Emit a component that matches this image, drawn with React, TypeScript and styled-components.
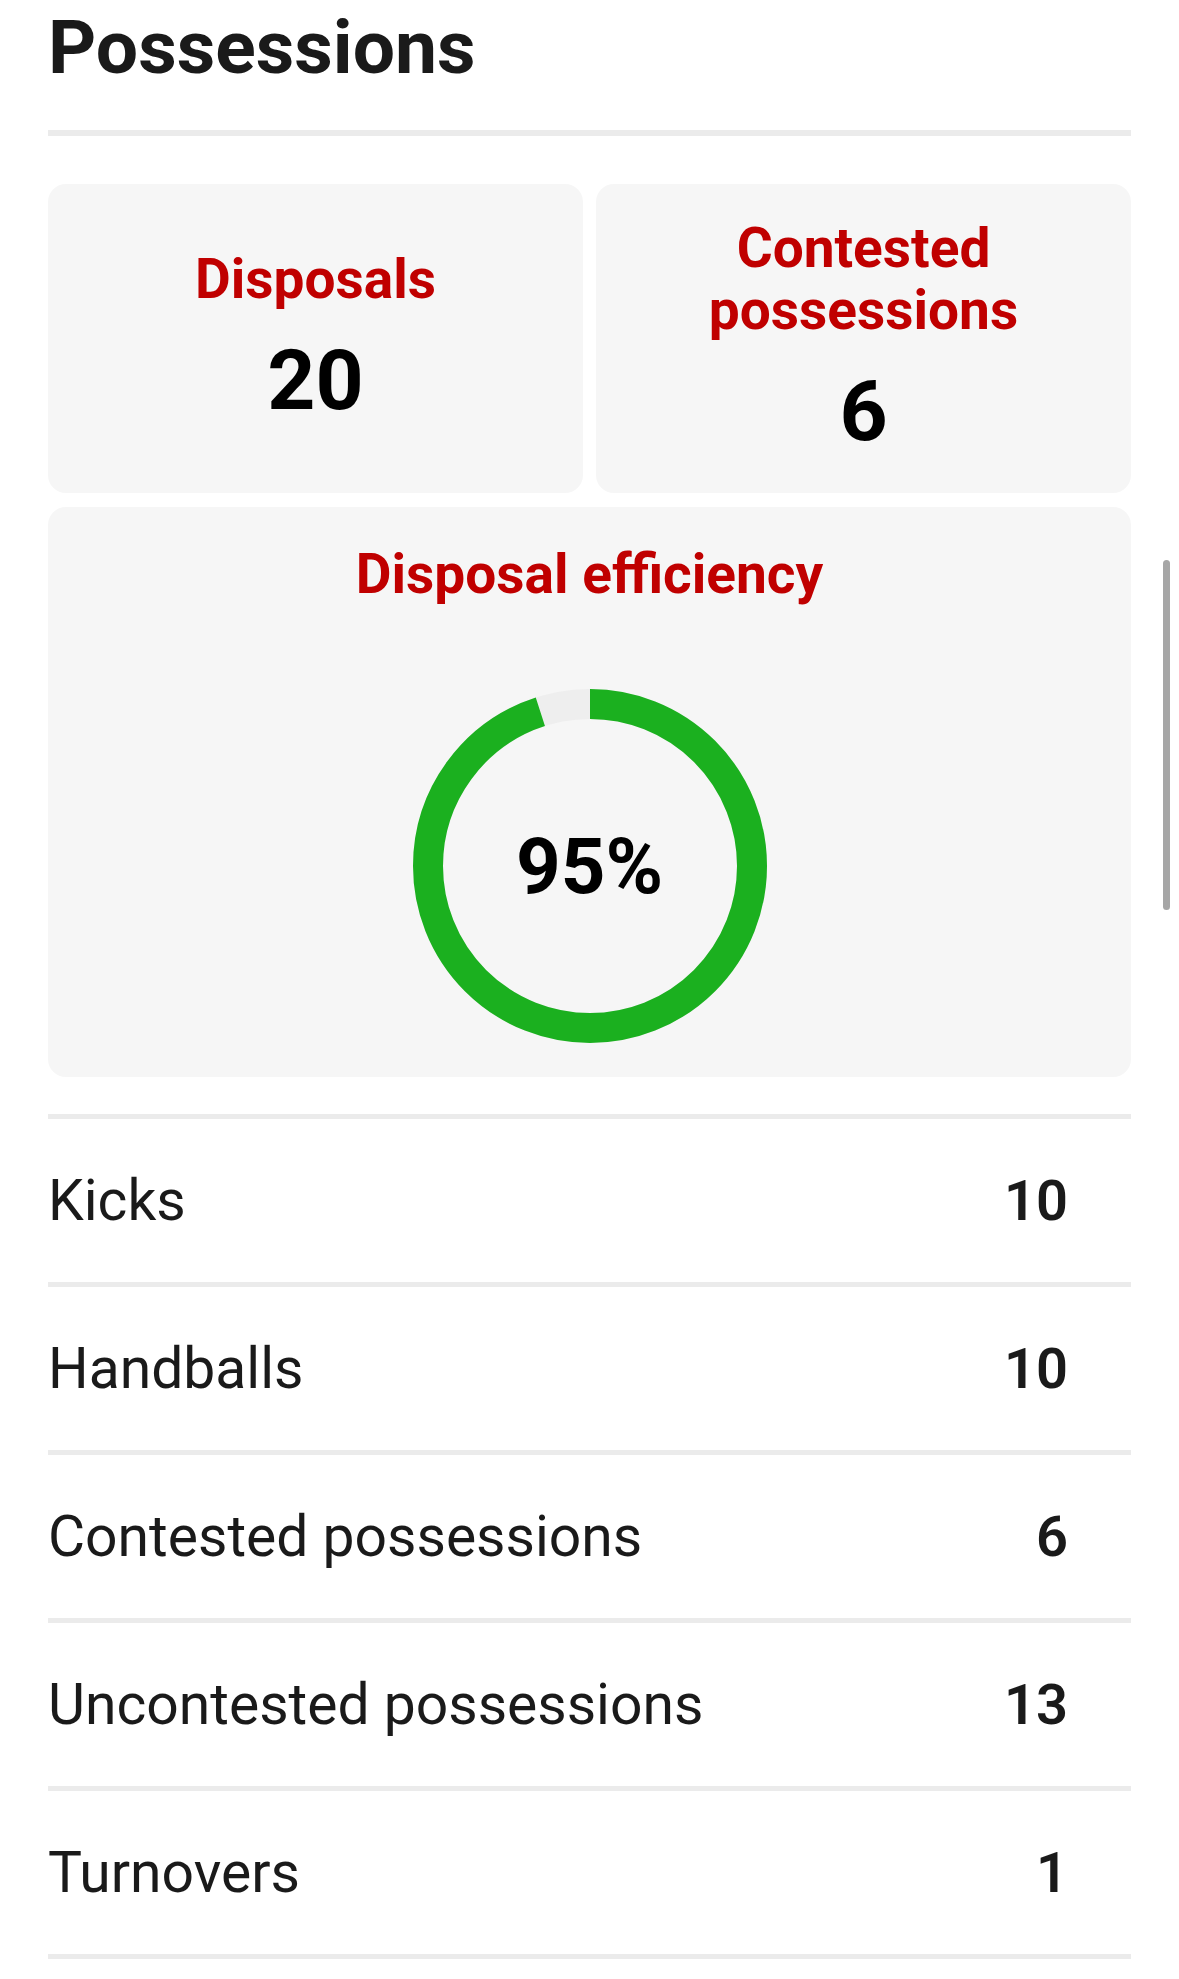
import React from 'react';
import styled, { createGlobalStyle } from 'styled-components';

const GlobalStyle = createGlobalStyle`
  html, body {
    margin: 0;
    padding: 0;
    background: #ffffff;
  }
  body {
    font-family: Roboto, 'Liberation Sans', Arial, sans-serif;
    color: #1a1a1a;
  }
`;

const Page = styled.main`
  padding: 4px 48px 0;
`;

const Title = styled.h1`
  margin: 0;
  font-size: 75px;
  line-height: 87px;
  font-weight: 700;
  color: #1a1a1a;
`;

const Rule = styled.div`
  height: 6px;
  background: #ebebeb;
  margin-top: 39px;
`;

const CardGrid = styled.section`
  display: grid;
  grid-template-columns: 1fr 1fr;
  column-gap: 13px;
  row-gap: 14px;
  margin-top: 48px;
`;

const Card = styled.div<{ $wide?: boolean }>`
  background: #f6f6f6;
  border-radius: 18px;
  display: flex;
  flex-direction: column;
  align-items: center;
  justify-content: ${(p) => (p.$wide ? 'flex-start' : 'center')};
  text-align: center;
  padding: ${(p) => (p.$wide ? '36px 20px 34px' : '33px 20px')};
  grid-column: ${(p) => (p.$wide ? '1 / span 2' : 'auto')};
`;

const CardLabel = styled.div`
  color: #c00000;
  font-size: 55px;
  line-height: 62px;
  font-weight: 700;
`;

const CardValue = styled.div`
  color: #000000;
  font-size: 84px;
  line-height: 96px;
  font-weight: 700;
  margin-top: 23px;
`;

const RingWrap = styled.div`
  position: relative;
  width: 354px;
  height: 354px;
  margin-top: 84px;
`;

const RingText = styled.div`
  position: absolute;
  inset: 0;
  display: flex;
  align-items: center;
  justify-content: center;
  font-size: 78px;
  font-weight: 700;
  color: #000000;
`;

const StatList = styled.ul`
  list-style: none;
  margin: 37px 0 0;
  padding: 0;
  border-bottom: 5px solid #ebebeb;
`;

const StatRow = styled.li`
  height: 163px;
  border-top: 5px solid #ebebeb;
  display: flex;
  align-items: center;
  justify-content: space-between;
  padding-right: 63px;
`;

const StatName = styled.span`
  font-size: 57px;
  font-weight: 400;
  color: #1a1a1a;
`;

const StatNumber = styled.span`
  font-size: 56px;
  font-weight: 600;
  color: #1a1a1a;
`;

const ScrollThumb = styled.div`
  position: fixed;
  top: 560px;
  right: 9px;
  width: 7px;
  height: 350px;
  border-radius: 4px;
  background: #a6a6a6;
`;

const Ring = ({ percent }: { percent: number }) => {
  const size = 354;
  const stroke = 30;
  const r = (size - stroke) / 2;
  const c = 2 * Math.PI * r;
  return (
    <RingWrap>
      <svg width={size} height={size} viewBox={`0 0 ${size} ${size}`}>
        <circle cx={size / 2} cy={size / 2} r={r} fill="none" stroke="#eeeeee" strokeWidth={stroke} />
        <circle
          cx={size / 2}
          cy={size / 2}
          r={r}
          fill="none"
          stroke="#1bb01f"
          strokeWidth={stroke}
          strokeDasharray={`${(c * percent) / 100} ${c}`}
          transform={`rotate(-90 ${size / 2} ${size / 2})`}
        />
      </svg>
      <RingText>{percent}%</RingText>
    </RingWrap>
  );
};

const stats = [
  { name: 'Kicks', value: 10 },
  { name: 'Handballs', value: 10 },
  { name: 'Contested possessions', value: 6 },
  { name: 'Uncontested possessions', value: 13 },
  { name: 'Turnovers', value: 1 },
];

export default function App() {
  return (
    <>
      <GlobalStyle />
      <Page>
        <Title>Possessions</Title>
        <Rule />
        <CardGrid>
          <Card>
            <CardLabel>Disposals</CardLabel>
            <CardValue>20</CardValue>
          </Card>
          <Card>
            <CardLabel>
              Contested
              <br />
              possessions
            </CardLabel>
            <CardValue>6</CardValue>
          </Card>
          <Card $wide>
            <CardLabel>Disposal efficiency</CardLabel>
            <Ring percent={95} />
          </Card>
        </CardGrid>
        <StatList>
          {stats.map((s) => (
            <StatRow key={s.name}>
              <StatName>{s.name}</StatName>
              <StatNumber>{s.value}</StatNumber>
            </StatRow>
          ))}
        </StatList>
      </Page>
      <ScrollThumb />
    </>
  );
}
